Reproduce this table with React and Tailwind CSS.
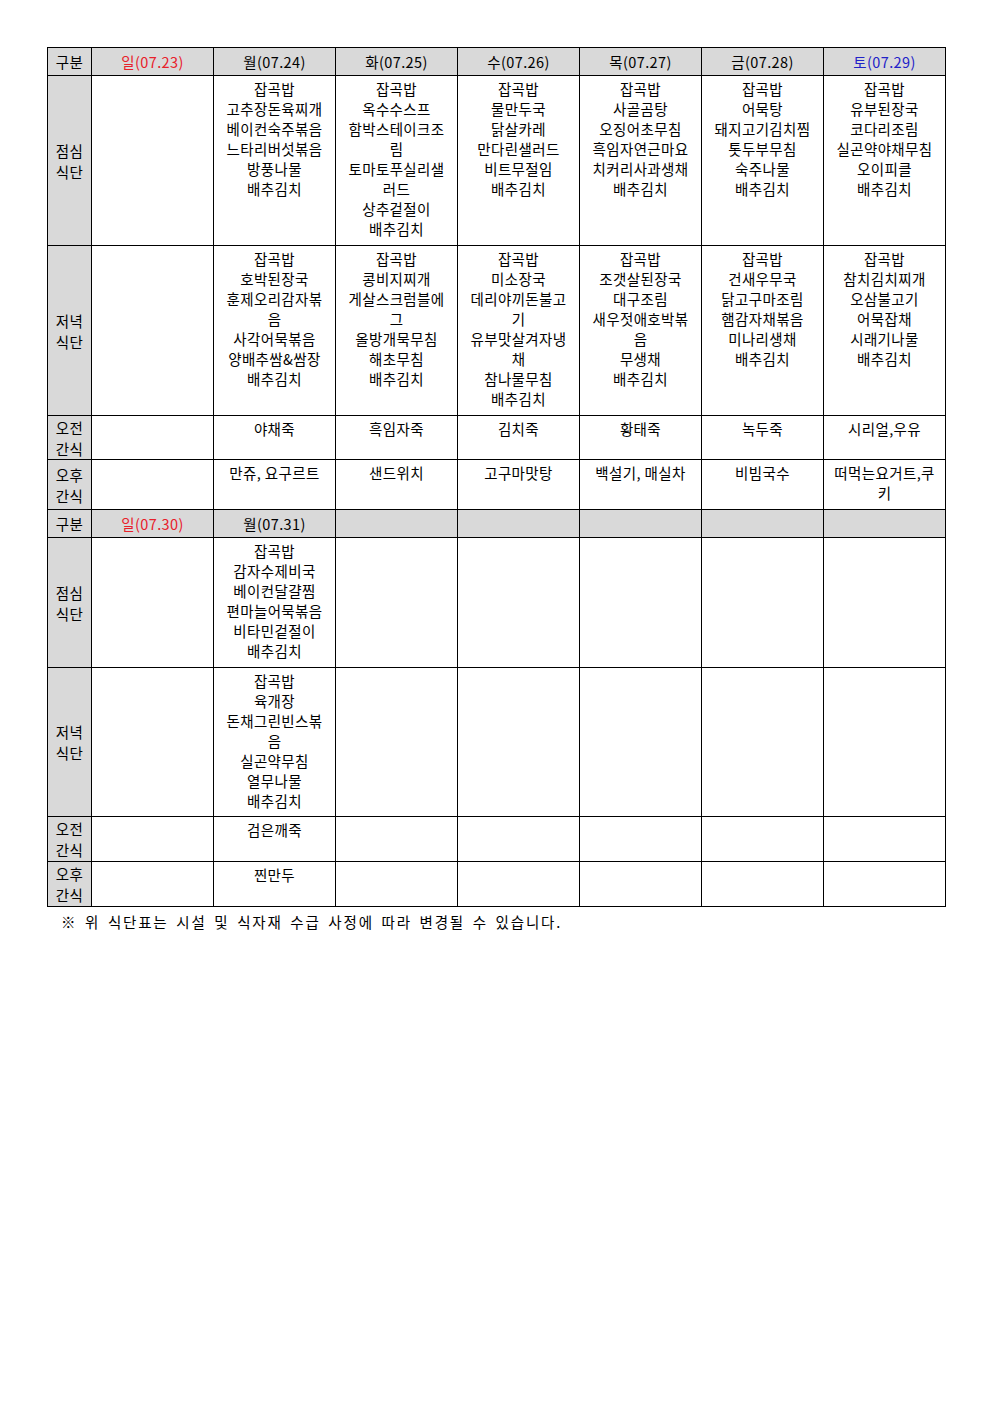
import React from "react";

const font = { fontFamily: '"Noto Sans CJK KR", "Noto Sans", sans-serif' };

const week1 = {
  days: [
    { label: "일(07.23)", tone: "red" },
    { label: "월(07.24)" },
    { label: "화(07.25)" },
    { label: "수(07.26)" },
    { label: "목(07.27)" },
    { label: "금(07.28)" },
    { label: "토(07.29)", tone: "blue" },
  ],
  rows: [
    {
      label: ["점심", "식단"],
      h: "h-[170px]",
      cells: [
        [],
        ["잡곡밥", "고추장돈육찌개", "베이컨숙주볶음", "느타리버섯볶음", "방풍나물", "배추김치"],
        ["잡곡밥", "옥수수스프", "함박스테이크조", "림", "토마토푸실리샐", "러드", "상추겉절이", "배추김치"],
        ["잡곡밥", "물만두국", "닭살카레", "만다린샐러드", "비트무절임", "배추김치"],
        ["잡곡밥", "사골곰탕", "오징어초무침", "흑임자연근마요", "치커리사과생채", "배추김치"],
        ["잡곡밥", "어묵탕", "돼지고기김치찜", "톳두부무침", "숙주나물", "배추김치"],
        ["잡곡밥", "유부된장국", "코다리조림", "실곤약야채무침", "오이피클", "배추김치"],
      ],
    },
    {
      label: ["저녁", "식단"],
      h: "h-[170px]",
      cells: [
        [],
        ["잡곡밥", "호박된장국", "훈제오리감자볶", "음", "사각어묵볶음", "양배추쌈&쌈장", "배추김치"],
        ["잡곡밥", "콩비지찌개", "게살스크럼블에", "그", "올방개묵무침", "해초무침", "배추김치"],
        ["잡곡밥", "미소장국", "데리야끼돈불고", "기", "유부맛살겨자냉", "채", "참나물무침", "배추김치"],
        ["잡곡밥", "조갯살된장국", "대구조림", "새우젓애호박볶", "음", "무생채", "배추김치"],
        ["잡곡밥", "건새우무국", "닭고구마조림", "햄감자채볶음", "미나리생채", "배추김치"],
        ["잡곡밥", "참치김치찌개", "오삼불고기", "어묵잡채", "시래기나물", "배추김치"],
      ],
    },
    {
      label: ["오전", "간식"],
      h: "h-[44px]",
      cells: [[], ["야채죽"], ["흑임자죽"], ["김치죽"], ["황태죽"], ["녹두죽"], ["시리얼,우유"]],
    },
    {
      label: ["오후", "간식"],
      h: "h-[50px]",
      cells: [[], ["만쥬, 요구르트"], ["샌드위치"], ["고구마맛탕"], ["백설기, 매실차"], ["비빔국수"], ["떠먹는요거트,쿠", "키"]],
    },
  ],
};

const week2 = {
  days: [
    { label: "일(07.30)", tone: "red" },
    { label: "월(07.31)" },
    { label: "" },
    { label: "" },
    { label: "" },
    { label: "" },
    { label: "" },
  ],
  rows: [
    {
      label: ["점심", "식단"],
      h: "h-[130px]",
      cells: [[], ["잡곡밥", "감자수제비국", "베이컨달걀찜", "편마늘어묵볶음", "비타민겉절이", "배추김치"], [], [], [], [], []],
    },
    {
      label: ["저녁", "식단"],
      h: "h-[149px]",
      cells: [[], ["잡곡밥", "육개장", "돈채그린빈스볶", "음", "실곤약무침", "열무나물", "배추김치"], [], [], [], [], []],
    },
    {
      label: ["오전", "간식"],
      h: "h-[45px]",
      cells: [[], ["검은깨죽"], [], [], [], [], []],
    },
    {
      label: ["오후", "간식"],
      h: "h-[45px]",
      cells: [[], ["찐만두"], [], [], [], [], []],
    },
  ],
};

const toneClass = { red: "text-[#e8202a]", blue: "text-[#2222c8]" };

function Week({ data }) {
  return (
    <>
      <tr className="h-[28px] bg-[#d9d9d9]">
        <td className="border border-black text-center align-middle">구분</td>
        {data.days.map((d, i) => (
          <td key={i} className={`border border-black text-center align-middle ${d.tone ? toneClass[d.tone] : ""}`}>
            {d.label}
          </td>
        ))}
      </tr>
      {data.rows.map((row, r) => (
        <tr key={r} className={row.h}>
          <td className="border border-black bg-[#d9d9d9] text-center align-middle leading-[21px]">
            {row.label.map((l) => (
              <div key={l}>{l}</div>
            ))}
          </td>
          {row.cells.map((lines, c) => (
            <td key={c} className="border border-black bg-white text-center align-top pt-[3px] leading-[20px]">
              {lines.map((l, k) => (
                <div key={k} className="whitespace-nowrap">
                  {l}
                </div>
              ))}
            </td>
          ))}
        </tr>
      ))}
    </>
  );
}

export default function App() {
  return (
    <div className="min-h-[1403px] bg-white pl-[47px] pt-[47px] text-[14.5px] tracking-[0.4px] text-black" style={font}>
      <table className="w-[899px] table-fixed border-collapse">
        <colgroup>
          <col className="w-[44px]" />
          <col className="w-[122px]" />
          <col className="w-[122px]" />
          <col className="w-[122px]" />
          <col className="w-[122px]" />
          <col className="w-[122px]" />
          <col className="w-[122px]" />
          <col className="w-[122px]" />
        </colgroup>
        <tbody>
          <Week data={week1} />
          <Week data={week2} />
        </tbody>
      </table>
      <p className="mt-[5px] pl-[14px] leading-[20px] tracking-[1.8px] [word-spacing:2.7px]">
        ※ 위 식단표는 시설 및 식자재 수급 사정에 따라 변경될 수 있습니다.
      </p>
    </div>
  );
}
